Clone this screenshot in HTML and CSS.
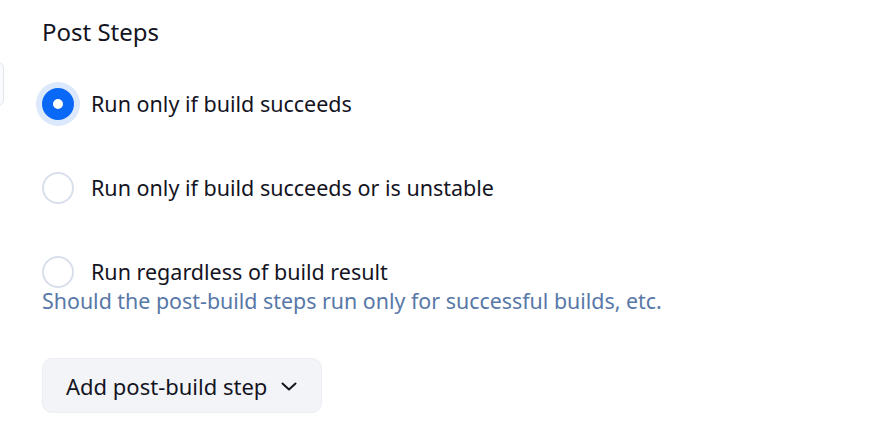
FILE: index.html
```html
<!DOCTYPE html>
<html lang="en">
<head>
  <meta charset="UTF-8">
  <title>Post Steps</title>
  <link rel="stylesheet" href="styles.css">
</head>
<body>

  <div class="side-tab"></div>

  <div class="section">
    <h2 class="section-title">Post Steps</h2>

    <div class="radios">
      <label class="radio">
        <input type="radio" name="postSteps" value="SUCCESS" checked>
        <span class="radio-mark"></span>
        <span class="radio-label">Run only if build succeeds</span>
      </label>

      <label class="radio">
        <input type="radio" name="postSteps" value="UNSTABLE">
        <span class="radio-mark"></span>
        <span class="radio-label">Run only if build succeeds or is unstable</span>
      </label>

      <label class="radio">
        <input type="radio" name="postSteps" value="FAILURE">
        <span class="radio-mark"></span>
        <span class="radio-label">Run regardless of build result</span>
      </label>
    </div>

    <div class="help">Should the post-build steps run only for successful builds, etc.</div>

    <button class="add-btn" type="button">
      Add post-build step
      <svg class="chevron" width="18" height="18" viewBox="0 0 18 18">
        <path d="M2.5 6.5L9 12.5l6.5-6" fill="none" stroke="currentColor" stroke-width="2" stroke-linecap="round" stroke-linejoin="round"/>
      </svg>
    </button>
  </div>

</body>
</html>
```

FILE: styles.css
```css
*, *::before, *::after {
  box-sizing: border-box;
}

body {
  margin: 0;
  font-family: "Noto Sans", "Open Sans", sans-serif;
  background-color: #fff;
  color: #14141f;
  position: relative;
  height: 447px;
  overflow: hidden;
}

.side-tab {
  position: absolute;
  left: -20px;
  top: 62px;
  width: 24px;
  height: 44px;
  border: 1px solid #e3e6ec;
  border-radius: 6px;
  background-color: #fafbfc;
}

.section {
  padding: 15px 0 0 42px;
}

.section-title {
  margin: 0;
  font-size: 24px;
  font-weight: 400;
  line-height: 34px;
}

.radios {
  display: flex;
  flex-direction: column;
  gap: 40px;
  margin-top: 33px;
}

.radio {
  display: flex;
  align-items: center;
  gap: 11px;
  height: 44px;
  margin-left: -6px;
  cursor: pointer;
}

.radio input {
  display: none;
}

.radio-mark {
  width: 44px;
  height: 44px;
  display: flex;
  align-items: center;
  justify-content: center;
  border-radius: 50%;
  flex-shrink: 0;
}

.radio-mark::before {
  content: "";
  width: 32px;
  height: 32px;
  flex-shrink: 0;
  border-radius: 50%;
  border: 2px solid #d9dfea;
  background-color: #fff;
}

.radio input:checked + .radio-mark {
  background-color: #dce8fc;
}

.radio input:checked + .radio-mark::before {
  border: 11px solid #0a68f7;
  background-color: #fff;
}

.radio-label {
  font-size: 21.5px;
  line-height: 28px;
}

.help {
  margin-top: -6px;
  font-size: 21.4px;
  line-height: 26px;
  color: #5878a8;
}

.add-btn {
  margin-top: 44px;
  display: flex;
  align-items: center;
  gap: 13px;
  height: 55px;
  padding: 0 23px 0 23px;
  border: 1px solid #ebeef3;
  border-radius: 10px;
  background-color: #f2f4f8;
  color: #14141f;
  font-family: inherit;
  font-size: 22px;
  cursor: pointer;
}

.chevron {
  flex-shrink: 0;
}
```
